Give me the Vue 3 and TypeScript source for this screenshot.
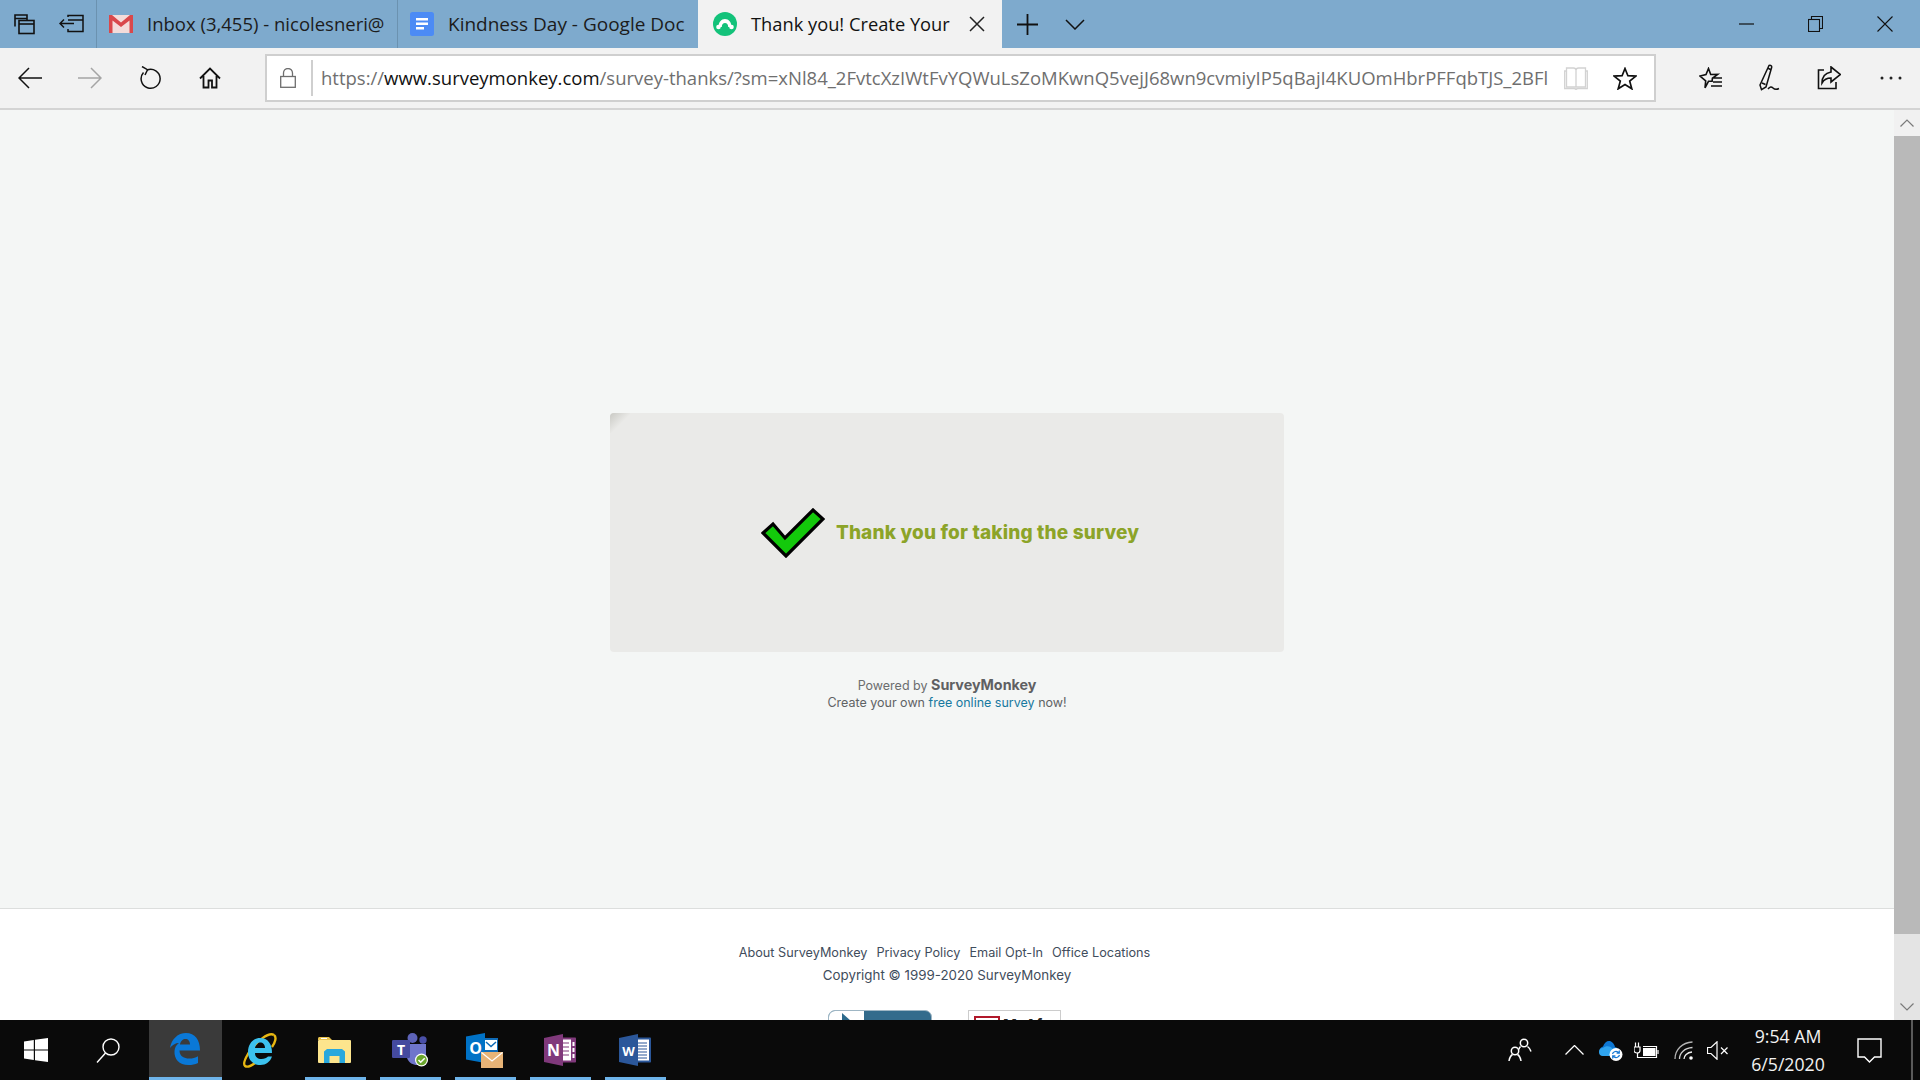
<script setup lang="ts">
const footerLinks: string[] = ['About SurveyMonkey', 'Privacy Policy', 'Email Opt-In', 'Office Locations']
</script>

<template>
  <div class="screen">
    <header class="titlebar">
      <div class="tb-tools">
        <button class="tb-tool">
          <svg width="22" height="22" viewBox="0 0 22 22" fill="none" stroke="#111" stroke-width="1.6"><path d="M2 13.500V2h12v5M2 5.500h12"/><rect x="6" y="7.500" width="15" height="13"/><path d="M6 11h15"/></svg>
        </button>
        <button class="tb-tool">
          <svg width="26" height="20" viewBox="0 0 26 20" fill="none" stroke="#111" stroke-width="1.500"><path d="M9 3V1.500h15v16H9V15M9 6h15M1 9.500h14M5 5.500l-4 4 4 4"/></svg>
        </button>
      </div>
      <div class="tab tab-inbox">
        <svg class="fav" width="24" height="18" viewBox="0 0 24 18"><rect width="24" height="18" fill="#f4dcda"/><path d="M0 0h3L12 7.500 21 0h3v18h-3.500V5.500L12 12 3.500 5.500V18H0z" fill="#d9484b"/></svg>
        <span class="tab-text">Inbox (3,455) - nicolesneri@</span>
      </div>
      <div class="tab tab-docs">
        <svg class="fav" width="24" height="24" viewBox="0 0 24 24"><rect width="24" height="24" rx="2.500" fill="#4c8bf5"/><path d="M6 6h12v2.400H6zM6 10.500h12v2.400H6zM6 15h8v2.400H6z" fill="#fff"/></svg>
        <span class="tab-text">Kindness Day - Google Doc</span>
      </div>
      <div class="tab tab-active">
        <svg class="fav" width="24" height="24" viewBox="0 0 24 24"><circle cx="12" cy="12" r="12" fill="#13c27a"/><path d="M5.500 15c0-5 2.800-8 6.500-8s6.500 3 6.500 8h-3.300c0-2.500-1.300-4-3.200-4s-3.200 1.500-3.200 4z" fill="#fff"/><circle cx="5.500" cy="15" r="2.300" fill="#fff"/><circle cx="18.500" cy="15" r="2.300" fill="#fff"/></svg>
        <span class="tab-text">Thank you! Create Your</span>
        <svg class="tab-close" width="16" height="16" viewBox="0 0 16 16" stroke="#222" stroke-width="1.500"><path d="M1 1l14 14M15 1L1 15"/></svg>
      </div>
      <button class="new-tab">
        <svg width="21" height="21" viewBox="0 0 21 21" stroke="#111" stroke-width="1.800"><path d="M10.500 0v21M0 10.500h21"/></svg>
      </button>
      <button class="tab-list">
        <svg width="20" height="11" viewBox="0 0 20 11" fill="none" stroke="#111" stroke-width="1.500"><path d="M1 1l9 9 9-9"/></svg>
      </button>
      <div class="win-buttons">
        <button class="win-btn"><svg width="15" height="2" viewBox="0 0 15 2" stroke="#111" stroke-width="1.200"><path d="M0 1h15"/></svg></button>
        <button class="win-btn"><svg width="15" height="16" viewBox="0 0 15 16" fill="none" stroke="#111" stroke-width="1.100"><rect x=".5" y="3.500" width="11" height="12"/><path d="M3.500 3.500V.5h11v12h-3"/></svg></button>
        <button class="win-btn"><svg width="16" height="16" viewBox="0 0 16 16" stroke="#111" stroke-width="1.100"><path d="M.5.5l15 15M15.500.5l-15 15"/></svg></button>
      </div>
    </header>

    <nav class="toolbar">
      <button class="tool"><svg width="24" height="22" viewBox="0 0 24 22" fill="none" stroke="#111" stroke-width="1.500"><path d="M24 11H1M11 1L1 11l10 10"/></svg></button>
      <button class="tool"><svg width="24" height="22" viewBox="0 0 24 22" fill="none" stroke="#a5a5a5" stroke-width="1.500"><path d="M0 11h23M13 1l10 10-10 10"/></svg></button>
      <button class="tool"><svg width="22" height="24" viewBox="0 0 22 24" fill="none" stroke="#111" stroke-width="1.500"><path d="M4.500 6.500A9.500 9.500 0 1 0 8 4"/><path d="M3 .5L8.500 3.700 6 9"/></svg></button>
      <button class="tool"><svg width="22" height="22" viewBox="0 0 22 22" fill="none" stroke="#111" stroke-width="1.800"><path d="M1 11.500L11 1.500l10 10M4.500 9v11.500h5v-7h3.500v7h4.500V9"/></svg></button>
      <div class="address">
        <svg class="lock" width="16" height="20" viewBox="0 0 16 20" fill="none" stroke="#6e6e6e" stroke-width="1.300"><rect x=".7" y="8.500" width="14.600" height="10.800"/><path d="M3.500 8.500V5a4.500 4.500 0 0 1 9 0v3.500"/></svg>
        <span class="addr-sep"></span>
        <div class="url"><span class="url-dim">https://</span><span class="url-host">www.surveymonkey.com</span><span class="url-dim">/survey-thanks/?sm=xNl84_2FvtcXzIWtFvYQWuLsZoMKwnQ5vejJ68wn9cvmiyIP5qBajI4KUOmHbrPFFqbTJS_2BFl</span></div>
        <svg class="reading" width="24" height="23" viewBox="0 0 24 23" fill="none" stroke="#d2d2d2" stroke-width="1.300"><path d="M2.500 1h7c1.500 0 2.500.8 2.500 2.200V20H2.500zM21.500 1h-7C13 1 12 1.800 12 3.200V20h9.500z"/><path d="M2.500 4H.7v17.500H10c1 0 1.500.3 2 1 .5-.7 1-1 2-1h9.300V4h-1.800"/></svg>
        <svg class="star" width="24" height="23" viewBox="0 0 24 23" fill="none" stroke="#111" stroke-width="1.700"><path d="M12 1.500l2.900 7.200 8 .4-6.200 5 2.100 7.700L12 17.500l-6.800 4.300 2.100-7.700-6.200-5 8-.4z"/></svg>
      </div>
      <div class="tool-right">
        <button class="tool"><svg width="24" height="23" viewBox="0 0 24 23" fill="none" stroke="#111" stroke-width="1.600"><path d="M9.500 1.500l2.200 6 7-.2-5.300 4-.3 3-3.600 0-3.500 6.500.7-7L1 9l6-1.400zM14 11h9M14 15h9M12 19h11"/></svg></button>
        <button class="tool"><svg width="24" height="28" viewBox="0 0 24 28" fill="none" stroke="#111" stroke-width="1.500"><path d="M10 1.500c1.500-.7 3 .3 2.700 1.800L7 23l-4.500 2.700L1 21zM8.500 4l3 1.500M3 19l3.500 1.500"/><path d="M9 25c2-2.500 3.500-2.500 5-1s3 2 6 .5"/></svg></button>
        <button class="tool tool-share"><svg width="24" height="24" viewBox="0 0 24 24" fill="none" stroke="#111" stroke-width="1.600"><path d="M7 4H1.500v18.500H19V16"/><path d="M14 1l9.500 7.500L14 16v-4c-4 0-7 1.500-9 5 0-6 3.500-10 9-11z"/></svg></button>
        <button class="tool"><svg width="22" height="4" viewBox="0 0 22 4" fill="#222"><circle cx="2" cy="2" r="1.500"/><circle cx="11" cy="2" r="1.500"/><circle cx="20" cy="2" r="1.500"/></svg></button>
      </div>
    </nav>

    <div class="viewport">
      <main class="page">
        <section class="hero">
          <div class="card">
            <span class="fold"></span>
            <svg class="check" width="64" height="50" viewBox="0 0 64 50"><path d="M2 25L12 16 24 30 52 2 62 11 25 48z" fill="#13c90b" stroke="#000" stroke-width="3.200" stroke-linejoin="miter"/></svg>
            <h1 class="thanks">Thank you for taking the survey</h1>
          </div>
          <p class="powered">Powered by <strong>SurveyMonkey</strong></p>
          <p class="powered second">Create your own <a href="#" class="blue">free online survey</a> now!</p>
        </section>
        <footer class="footer">
          <div class="links"><a v-for="link in footerLinks" :key="link" href="#">{{ link }}</a></div>
          <div class="copyright">Copyright © 1999-2020 SurveyMonkey</div>
          <div class="badges">
            <div class="badge-a"><span class="badge-a-left"><svg width="16" height="12" viewBox="0 0 16 12"><path d="M5 0l9 8v4H5z" fill="#2c6a8c"/></svg></span></div>
            <div class="badge-b"><svg width="26" height="20" viewBox="0 0 26 20"><path d="M1 2h24v10c-3 4-7 6-12 8C8 18 4 16 1 12z" fill="#fff" stroke="#b1182a" stroke-width="2"/></svg><b>McAfee</b></div>
          </div>
        </footer>
      </main>
      <aside class="scrollbar">
        <div class="sb-btn"><svg width="14" height="8" viewBox="0 0 14 8" fill="none" stroke="#7a7a7a" stroke-width="1.200"><path d="M.5 7.500L7 1l6.500 6.500"/></svg></div>
        <div class="sb-thumb"></div>
        <div class="sb-track"></div>
        <div class="sb-btn sb-bottom"><svg width="14" height="8" viewBox="0 0 14 8" fill="none" stroke="#7a7a7a" stroke-width="1.200"><path d="M.5.5L7 7l6.500-6.500"/></svg></div>
      </aside>
    </div>

    <footer class="taskbar">
      <button class="task task-start">
        <svg width="24" height="24" viewBox="0 0 24 24" fill="#fff"><path d="M0 3.400l9.800-1.400v9.400H0zM11 1.800L24 0v11.400H11zM0 12.600h9.800V22L0 20.600zM11 12.600h13V24l-13-1.800z"/></svg>
      </button>
      <button class="task task-search">
        <svg width="24" height="25" viewBox="0 0 24 25" fill="none" stroke="#fff" stroke-width="1.400"><circle cx="15" cy="9" r="8"/><path d="M9.500 15L1 24.500"/></svg>
      </button>
      <button class="task task-on">
        <svg width="30" height="32" viewBox="0 0 30 32" fill-rule="evenodd"><path fill="#0a78d7" d="M0 15C1.500 6 8 0 16 0c9 0 14 6.500 14 17.500H9.500c0 6 5 8 9.500 8 3.500 0 6.500-.8 9-2.300V30c-3 1.400-6 2-9.500 2-9.500 0-14.500-6-14-14 .2-3.500 2-6.500 4.500-8C5.500 10 2 12 0 15zM10 11.500h10c0-3.500-2-5.500-4.500-5.500S10.500 8 10 11.500z"/></svg>
      </button>
      <button class="task task-ie">
        <svg width="34" height="36" viewBox="0 0 34 36" fill="none"><path d="M31 3C26 0 14 8 5 22c-3 5-5 10-3 12 2 1.500 6 0 10-3" stroke="#e8b712" stroke-width="2.400"/><path d="M31 3c3 2 1 8-2 12" stroke="#e8b712" stroke-width="2.400"/><path fill="#3cc2ee" d="M17 6c8 0 12 6 12 15H12c0 4 3 6 6.500 6 3 0 5-1 6.500-2.500H29C27 30 23 33 17.500 33 10 33 5 28 5 20S10 6 17 6zM12 16h10c0-3.500-2-5.500-5-5.500s-4.500 2.500-5 5.500z" fill-rule="evenodd"/></svg>
      </button>
      <button class="task task-run">
        <svg width="33" height="26" viewBox="0 0 33 26"><path d="M0 1.500C0 .7.700 0 1.500 0H11l3 3h-14z" fill="#e9c34e"/><rect y="3" width="33" height="23" rx="1" fill="#fde58d"/><path d="M3 1.500h6" stroke="#fff" stroke-width="1"/><path d="M6 26V14.500L9 12h15l3 2.500V26h-5.500v-7h-10v7z" fill="#29a8dd"/></svg>
      </button>
      <button class="task task-run">
        <svg width="36" height="36" viewBox="0 0 36 36"><circle cx="20.500" cy="6" r="5" fill="#5d63b8"/><circle cx="31" cy="8" r="3.700" fill="#4a50a8"/><path d="M14 12h20v12c-1 6-5 9-9 9s-8-2-10-7z" fill="#6f76cb"/><rect y="8" width="18" height="18" rx="1.200" fill="#444a9f"/><text x="9" y="23" class="ic-letter" font-size="14" text-anchor="middle">T</text><circle cx="29.500" cy="28" r="6.500" fill="#fff"/><circle cx="29.500" cy="28" r="5.300" fill="#6ba62d"/><path d="M26.500 28l2.200 2.200 4-4" fill="none" stroke="#fff" stroke-width="1.500"/></svg>
      </button>
      <button class="task task-run">
        <svg width="38" height="38" viewBox="0 0 38 38"><rect x="14" y="7" width="18" height="18" fill="#0f6bb7"/><path d="M19 9h12v10H19z" fill="#fff"/><path d="M20 11l5 4.500 5-4.500" fill="none" stroke="#0f6bb7" stroke-width="1.500"/><path d="M0 5.500L19 2v30l-19-3.500z" fill="#0072c6"/><text x="9.500" y="23" class="ic-letter" font-size="16" text-anchor="middle">O</text><rect x="15" y="21" width="22" height="16" fill="#e8b477"/><path d="M15.500 21.500L26 30l10.500-8.500" fill="none" stroke="#fff" stroke-width="1.200"/></svg>
      </button>
      <button class="task task-run">
        <svg width="32" height="32" viewBox="0 0 32 32"><rect x="15" y="3.500" width="17" height="25" rx=".8" fill="#80397b"/><path d="M17 5.500h10v21H17z" fill="#fff"/><path d="M28.500 8h2v4h-2zM28.500 14h2v4h-2zM28.500 20h2v4h-2z" fill="#fff"/><path d="M19 9h6M19 13h6M19 17h6M19 21h6" stroke="#80397b" stroke-width="1.200"/><path d="M0 4L19 0v32L0 28z" fill="#80397b"/><text x="9.500" y="22" class="ic-letter" font-size="16" text-anchor="middle">N</text></svg>
      </button>
      <button class="task task-run">
        <svg width="32" height="32" viewBox="0 0 32 32"><rect x="15" y="3.500" width="17" height="25" rx=".8" fill="#2b579a"/><path d="M17 5.500h13v21H17z" fill="#fff"/><path d="M19 9h9M19 12h9M19 15h9M19 18h9M19 21h9M19 24h9" stroke="#2b579a" stroke-width="1.200"/><path d="M0 4L19 0v32L0 28z" fill="#2b579a"/><text x="9.500" y="21.500" class="ic-letter" font-size="13" text-anchor="middle">W</text></svg>
      </button>
      <div class="tray">
        <svg class="t-people" width="24" height="24" viewBox="0 0 24 24" fill="none" stroke="#fff" stroke-width="1.500"><circle cx="16" cy="5" r="3.700"/><path d="M12.500 8.500c-1 1-1.500 2-1.500 3M19.500 8.500c1.500 1 2.800 2.500 3.500 5"/><circle cx="7" cy="13" r="3.700"/><path d="M1 23c.5-3 1.800-5.500 3.500-6.500M9.500 16.500c1.700 1 3 3.500 3.500 6.500"/></svg>
        <svg class="t-caret" width="19" height="10" viewBox="0 0 19 10" fill="none" stroke="#fff" stroke-width="1.300"><path d="M.5 9.500l9-9 9 9"/></svg>
        <svg class="t-cloud" width="25" height="21" viewBox="0 0 25 21"><path d="M5 16a5 5 0 0 1 0-9.500C6.500 2 10 0 13 1.500c2 1 3.500 3 4 5.500 2 .3 3 1.500 3 3v6z" fill="#0f78d4"/><path d="M5 16a4 4 0 0 1 0-8c3-3 8-2 10 1h2v7z" fill="#2fa4ef"/><circle cx="18" cy="14.500" r="6.500" fill="#fff"/><path d="M14.500 14c.5-2 3-3.300 5.500-2l1 1M21.500 15c-.5 2-3 3.300-5.500 2l-1-1M21.300 10.500v2.700h-2.700M14.700 18.500v-2.700h2.700" fill="none" stroke="#1778d2" stroke-width="1.200"/></svg>
        <svg class="t-batt" width="25" height="17" viewBox="0 0 25 17" fill="none" stroke="#fff" stroke-width="1.200"><path d="M4.500 5V.5M1.500 5V.5"/><path d="M0 5h6v3.500c0 1.500-1.500 2.500-3 2.500S0 10 0 8.500z"/><path d="M3.500 11v4.500H22.500v-11H9"/><rect x="9" y="6" width="12.500" height="8" fill="#fff" stroke="none"/><path d="M24 8v4"/></svg>
        <svg class="t-wifi" width="19" height="19" viewBox="0 0 19 19" fill="none" stroke="#b4b4b4" stroke-width="1.300"><path d="M1 18C1 9 8 1.500 18.500 1"/><path d="M5.500 18c0-6 5-11 13-11.500" stroke="#d0d0d0"/><path d="M10 18c0-3 3-6.500 8-7" stroke="#f0f0f0"/><circle cx="17" cy="17" r="1.800" fill="#fff" stroke="none"/></svg>
        <svg class="t-sound" width="22" height="19" viewBox="0 0 22 19" fill="none" stroke="#fff" stroke-width="1.200"><path d="M.5 6.500h3.500L10 .8v17.400L4 12.500H.5zM14 6.500l6.500 6.500M20.500 6.500L14 13"/></svg>
        <div class="clock"><div>9:54 AM</div><div>6/5/2020</div></div>
        <svg class="t-note" width="25" height="25" viewBox="0 0 25 25" fill="none" stroke="#fff" stroke-width="1.400"><path d="M1 1h23v18h-6.500L12.500 24l-5-5H1z"/></svg>
        <span class="show-desktop"></span>
      </div>
    </footer>
  </div>
</template>

<style scoped>
.screen { width: 1920px; height: 1080px; display: flex; flex-direction: column; overflow: hidden; font-family: "Open Sans", "Noto Sans", sans-serif; }
button { border: 0; background: none; padding: 0; margin: 0; display: flex; align-items: center; justify-content: center; }
p, h1 { margin: 0; }
a { text-decoration: none; color: inherit; }
svg { display: block; flex: none; }

.titlebar { height: 48px; flex: none; display: flex; background: #7eaacd; color: #1c1c1c; font-size: 18.500px; }
.tb-tools { width: 96px; display: flex; flex: none; }
.tb-tool { width: 48px; height: 48px; }
.tab { width: 301px; flex: none; height: 48px; display: flex; align-items: center; padding-left: 12px; border-left: 1px solid #6b92b0; box-sizing: border-box; overflow: hidden; }
.tab-docs { font-size: 19px; }
.tab-active { width: 304px; background: #f2f2f2; border-left: 0; padding-left: 15px; color: #111; position: relative; font-size: 18.300px; }
.fav { margin-right: 14px; }
.tab-text { white-space: nowrap; flex: none; margin-top: -1px; }
.tab-close { position: absolute; left: 271px; top: 16px; }
.new-tab { width: 50px; height: 48px; flex: none; }
.tab-list { width: 46px; height: 48px; flex: none; }
.win-buttons { margin-left: auto; margin-right: 1px; display: flex; }
.win-btn { width: 69px; height: 48px; }

.toolbar { height: 60px; flex: none; display: flex; align-items: center; background: #f2f2f2; border-bottom: 2px solid #d4d4d4; }
.tool { width: 60px; height: 60px; flex: none; }
.tool-share svg { margin-right: 4px; }
.address { margin-left: 25px; width: 1391px; height: 48px; box-sizing: border-box; flex: none; display: flex; align-items: center; background: #fff; border: 2px solid #cfcfcf; }
.lock { margin-left: 13px; }
.addr-sep { width: 2px; height: 36px; background: #cfcfcf; margin-left: 15px; margin-right: 8px; flex: none; }
.url { width: 1227px; flex: none; overflow: hidden; white-space: nowrap; font-size: 18.500px; color: #6f6f6f; margin-top: -1px; }
.url-host { color: #111; }
.reading { margin-left: 16px; }
.star { margin-left: 25px; }
.tool-right { display: flex; margin-left: 25px; }

.viewport { height: 910px; flex: none; display: flex; }
.page { flex: 1; min-width: 0; display: flex; flex-direction: column; overflow: hidden; background: #f4f6f5; }
.hero { height: 798px; flex: none; box-sizing: border-box; padding-top: 303px; display: flex; flex-direction: column; align-items: center; }
.card { position: relative; width: 674px; height: 239px; flex: none; box-sizing: border-box; padding-left: 6px; background: #eaeae8; border-radius: 4px; display: flex; align-items: center; justify-content: center; gap: 11px; }
.fold { position: absolute; left: 0; top: 0; width: 20px; height: 20px; border-top-left-radius: 4px; background: linear-gradient(135deg, #c9c9c4 0%, #eaeae8 55%); }
.thanks { font-family: Inter, sans-serif; font-size: 19px; letter-spacing: .16px; font-weight: 800; color: #8ca428; white-space: nowrap; }
.powered { margin-top: 24px; line-height: 17px; font-family: Inter, sans-serif; font-size: 12.500px; color: #6b6d6e; }
.powered strong { font-size: 14.300px; font-weight: 700; color: #5f6062; }
.second { margin-top: 0; color: #5f6264; }
.blue { color: #1879a0; }

.footer { flex: 1; min-height: 0; background: #fff; border-top: 1px solid #dcdedd; box-sizing: border-box; padding-top: 34px; overflow: hidden; color: #3f4d5c; font-family: Inter, sans-serif; }
.links { display: flex; justify-content: center; gap: 9px; font-size: 12.700px; line-height: 20px; padding-right: 5px; }
.copyright { text-align: center; font-size: 13.350px; line-height: 22px; margin-top: 1px; }
.badges { display: flex; justify-content: center; gap: 36px; margin-top: 24px; padding-right: 5px; }
.badge-a { width: 104px; height: 30px; box-sizing: border-box; flex: none; background: #336b8c; border: 1px solid #9fb6c4; border-radius: 7px 7px 0 0; overflow: hidden; }
.badge-a-left { display: block; width: 35px; height: 30px; background: #fff; padding: 2px 0 0 8px; box-sizing: border-box; }
.badge-b { width: 93px; height: 30px; box-sizing: border-box; flex: none; border: 1px solid #ccc; background: #fff; display: flex; gap: 3px; padding: 4px 0 0 5px; font-size: 15px; color: #222; line-height: 16px; }
.badge-b b { margin-top: 2px; }

.scrollbar { width: 26px; flex: none; display: flex; flex-direction: column; background: #e4e4e4; }
.sb-btn { height: 26px; flex: none; display: flex; align-items: center; justify-content: center; background: #f1f1f1; }
.sb-thumb { height: 798px; flex: none; background: #b9b9b9; }
.sb-track { flex: 1; }
.sb-bottom { background: #e4e4e4; }

.taskbar { height: 60px; flex: none; display: flex; background: #0a0a0a; color: #f2f2f2; }
.task { width: 75px; height: 60px; flex: none; box-sizing: border-box; position: relative; }
.task-start { width: 71px; }
.task-search { width: 78px; }
.task-search svg { margin-right: 4px; }
.task-on { width: 73px; background: #3a3a3a; border-bottom: 3px solid #6eb4ea; }
.task-on svg { margin-right: 2px; }
.task-ie { width: 76px; }
.task-run svg { margin-right: 2px; }
.task-run::after { content: ""; position: absolute; left: 7px; right: 7px; bottom: 0; height: 3px; background: #6eb4ea; }
.ic-letter { font-family: "Open Sans", sans-serif; font-weight: 700; fill: #fff; }
.tray { margin-left: auto; display: flex; align-items: center; height: 60px; }
.t-people { margin-right: 33px; }
.t-caret { margin-right: 14px; }
.t-cloud { margin-right: 11px; }
.t-batt { margin-right: 15px; }
.t-wifi { margin-right: 14px; }
.t-sound { margin-right: 20px; }
.clock { width: 78px; flex: none; text-align: center; font-size: 17.700px; line-height: 28px; font-family: "Open Sans", sans-serif; }
.t-note { margin-left: 30px; margin-right: 29px; }
.show-desktop { width: 2px; height: 60px; background: #5a5a5a; margin-right: 7px; flex: none; }
</style>
